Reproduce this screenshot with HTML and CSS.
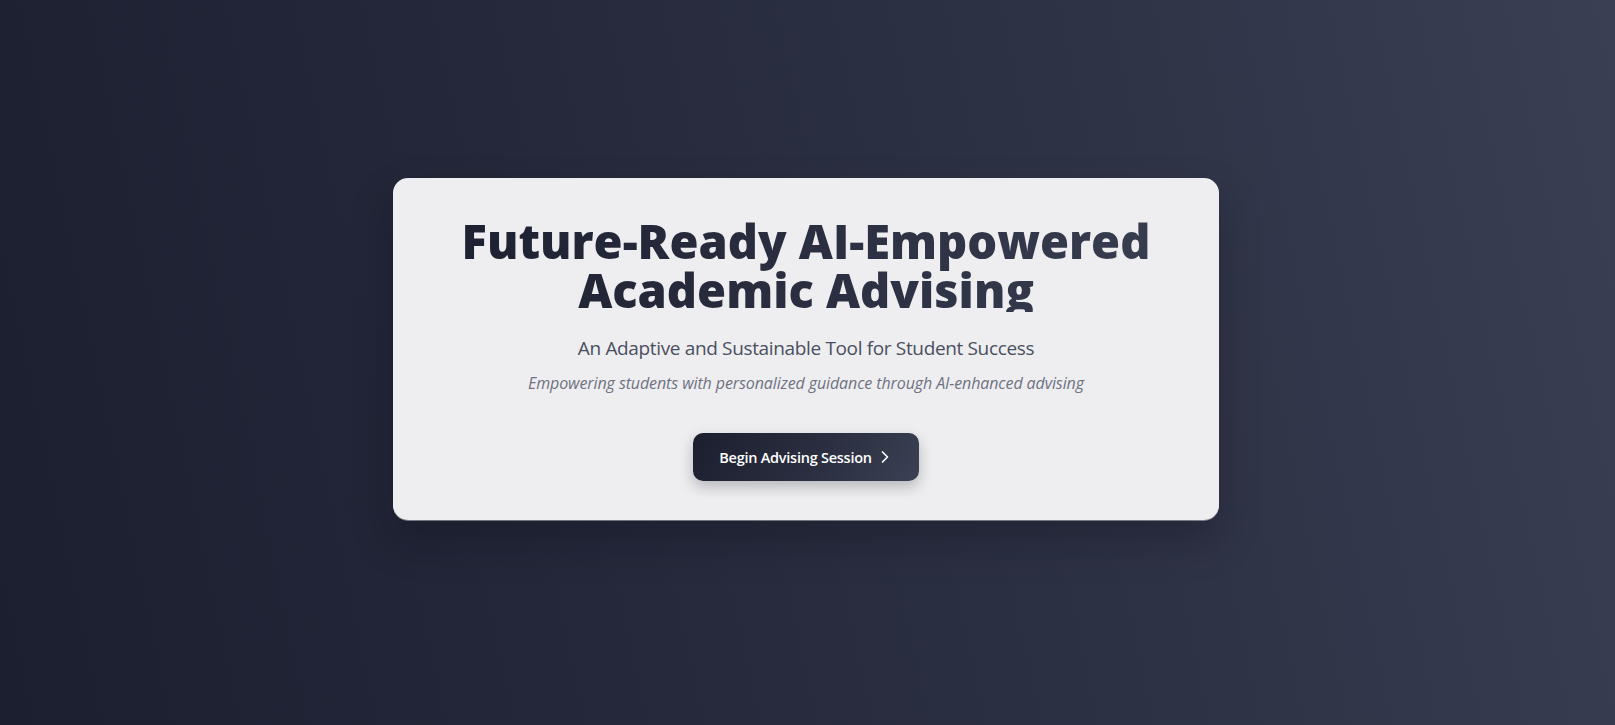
FILE: index.html
```html
<!DOCTYPE html>
<html lang="en">
<head>
<meta charset="utf-8">
<title>Future-Ready AI-Empowered Academic Advising</title>
<link rel="stylesheet" href="styles.css">
</head>
<body>
<main class="page">
  <section class="card">
    <h1 class="title">Future-Ready AI-Empowered Academic Advising</h1>
    <p class="subtitle">An Adaptive and Sustainable Tool for Student Success</p>
    <p class="tagline">Empowering students with personalized guidance through AI-enhanced advising</p>
    <button class="cta" type="button">
      <span>Begin Advising Session</span>
      <svg class="cta-icon" viewBox="0 0 24 24" width="20" height="20" fill="none" stroke="currentColor" stroke-width="2" stroke-linecap="round" stroke-linejoin="round"><path d="m9 18 6-6-6-6"/></svg>
    </button>
  </section>
</main>
</body>
</html>
```

FILE: styles.css
```css
* { box-sizing: border-box; }

html, body {
  margin: 0;
  height: 100%;
}

body {
  font-family: "Open Sans", "Noto Sans", "DejaVu Sans", sans-serif;
  background: linear-gradient(78deg, #1c1f30 0%, #24283a 35%, #2f3346 70%, #3b3f54 100%);
  overflow: hidden;
}

.page {
  height: 100vh;
  display: flex;
  align-items: center;
  justify-content: center;
  padding: 0 3px 27px 0;
}

.card {
  width: 826px;
  background: #eeeef0;
  border-radius: 15px;
  padding: 39px 40px 39px;
  text-align: center;
  box-shadow: 0 20px 40px rgba(10, 12, 22, 0.28), 0 1px 0 rgba(255, 255, 255, 0.5);
  display: flex;
  flex-direction: column;
  align-items: center;
}

.title {
  margin: 0;
  font-size: 47px;
  font-weight: 800;
  line-height: 49px;
  height: 95px;
  letter-spacing: 0;
  background: linear-gradient(90deg, #1d2030 0%, #2a2e40 50%, #383d50 100%);
  -webkit-background-clip: text;
  background-clip: text;
  color: transparent;
  -webkit-text-fill-color: transparent;
}

.subtitle {
  margin: 22px 0 0;
  font-size: 19px;
  letter-spacing: -0.35px;
  line-height: 28px;
  color: #4a4f60;
  font-weight: 400;
}

.tagline {
  margin: 9px 0 0;
  font-size: 16px;
  letter-spacing: -0.1px;
  line-height: 24px;
  font-style: italic;
  color: #6e7282;
}

.cta {
  margin-top: 38px;
  display: inline-flex;
  align-items: center;
  gap: 3px;
  height: 48px;
  padding: 0 24px 0 26px;
  border: none;
  border-radius: 10px;
  background: linear-gradient(120deg, #1c1f2e 0%, #2a2e40 55%, #3b4054 100%);
  color: #ffffff;
  font-family: "Open Sans", "Noto Sans", sans-serif;
  font-size: 14.5px;
  font-weight: 600;
  letter-spacing: -0.25px;
  box-shadow: 0 6px 14px rgba(20, 22, 35, 0.25);
  cursor: pointer;
}

.cta-icon {
  display: block;
}
```
